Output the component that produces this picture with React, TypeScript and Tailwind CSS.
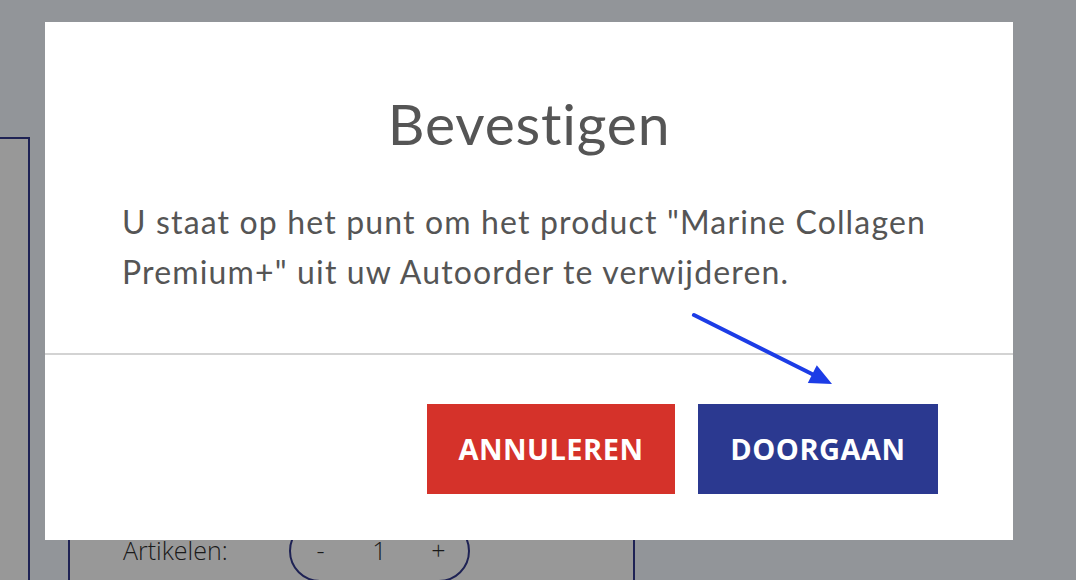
import React from 'react';

const NAVY = 'border-[#1e2254]';

// quantity stepper peeking out under the dialog
const QtyPill = () => (
  <div className={`grid h-[62px] w-[181px] shrink-0 grid-cols-3 items-center rounded-full border-2 ${NAVY} font-['Open_Sans',sans-serif] text-[25px] font-light text-[#1a1a1a]`}>
    <span className="text-center">-</span>
    <span className="text-center">1</span>
    <span className="text-center">+</span>
  </div>
);

export default function App() {
  return (
    <div className="relative flex h-[580px] w-[1076px] overflow-hidden bg-[#929599] font-['Lato',sans-serif]">
      {/* page behind the overlay */}
      <div className={`mt-[137px] h-[500px] w-[30px] shrink-0 border-r-2 border-t-2 ${NAVY} bg-[#989898]`}></div>
      <div className={`ml-[38px] mt-[400px] h-[240px] w-[567px] shrink-0 border-x-2 ${NAVY} bg-[#989898]`}>
        <div className="flex items-center gap-[38px] pl-[53px] pt-[120px]">
          <span className="w-[128px] font-['Open_Sans',sans-serif] text-[25px] font-light text-[#1a1a1a]">Artikelen:</span>
          <QtyPill />
        </div>
      </div>

      {/* confirm dialog */}
      <div className="absolute left-[45px] top-[22px] flex h-[518px] w-[968px] flex-col bg-white">
        <div className="flex h-[331px] flex-col px-[77px] pt-[73px]">
          <h1 className="text-center text-[57px] font-normal leading-[56px] tracking-[0.8px] text-[#555555]">Bevestigen</h1>
          <p className="mt-[46px] whitespace-nowrap text-[32px] leading-[50px] tracking-[1.15px] text-[#555555]">
            U staat op het punt om het product "Marine Collagen
            <br />
            Premium+" uit uw Autoorder te verwijderen.
          </p>
        </div>
        <div className="flex justify-end gap-[23px] border-t-2 border-[#d3d3d3] pr-[75px] pt-[49px]">
          <button className="flex h-[90px] w-[248px] items-center justify-center bg-[#d5322a] font-['Open_Sans',sans-serif] text-[29px] font-bold tracking-[0.5px] text-white">
            ANNULEREN
          </button>
          <button className="flex h-[90px] w-[240px] items-center justify-center bg-[#2b3990] font-['Open_Sans',sans-serif] text-[29px] font-bold tracking-[0.5px] text-white">
            DOORGAAN
          </button>
        </div>
      </div>

      {/* annotation arrow */}
      <svg className="pointer-events-none absolute left-0 top-0" width="1076" height="580" viewBox="0 0 1076 580">
        <line x1="694" y1="315" x2="813" y2="374.5" stroke="#1c3ce6" strokeWidth="4" strokeLinecap="round" />
        <polygon points="832,384 807.8,383.1 816.8,365.3" fill="#1c3ce6" />
      </svg>
    </div>
  );
}
